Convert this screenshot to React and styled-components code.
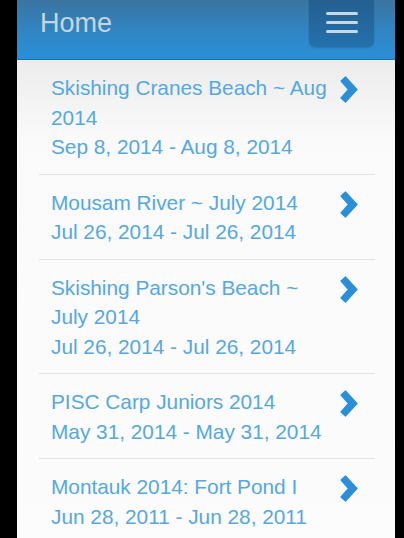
import styled, { createGlobalStyle } from 'styled-components';

const GlobalStyle = createGlobalStyle`
  html, body {
    margin: 0;
    background: #000;
    overflow: hidden;
  }
`;

const Frame = styled.div`
  margin-left: 17px;
  width: 378px;
  height: 538px;
  overflow: hidden;
  background: linear-gradient(to bottom, #ececec 60px, #fafafa 140px, #fcfcfc 100%);
  font-family: "Liberation Sans", Arial, sans-serif;
`;

const Header = styled.header`
  height: 59px;
  display: flex;
  justify-content: space-between;
  align-items: flex-start;
  padding: 0 21px 0 23px;
  background: linear-gradient(to bottom, #3b74a0 0%, #3183bf 45%, #2a90d8 100%);
  border-bottom: 1px solid #1e70aa;
`;

const Title = styled.h1`
  margin: 7px 0 0;
  font-size: 27px;
  font-weight: normal;
  line-height: 32px;
  color: #c8d5de;
`;

const MenuButton = styled.button`
  width: 65px;
  height: 47px;
  border: none;
  border-radius: 0 0 6px 6px;
  background: linear-gradient(to bottom, #245f8f, #2471ad);
  box-shadow: 0 1px 2px rgba(0, 0, 0, 0.15);
  display: flex;
  flex-direction: column;
  align-items: center;
  justify-content: center;
  gap: 6px;
  padding: 0 0 2px;
`;

const Bar = styled.span`
  width: 32px;
  height: 3px;
  border-radius: 2px;
  background: #c9d7e2;
`;

const List = styled.ul`
  list-style: none;
  margin: 0;
  padding: 0 20px 0 22px;
`;

const Item = styled.li`
  display: flex;
  align-items: flex-start;
  padding: 13px 0 12px 12px;
  border-bottom: 1px solid #e2e2e2;
`;

const Text = styled.div`
  width: 287px;
  font-size: 20.8px;
  line-height: 29.5px;
  color: #55a8e1;
`;

const Line = styled.div``;

const Chevron = styled.svg`
  flex: none;
  margin: 3px 0 0 2px;
  width: 18px;
  height: 27px;
`;

const trips = [
  { name: 'Skishing Cranes Beach ~ Aug 2014', dates: 'Sep 8, 2014 - Aug 8, 2014' },
  { name: 'Mousam River ~ July 2014', dates: 'Jul 26, 2014 - Jul 26, 2014' },
  { name: "Skishing Parson's Beach ~ July 2014", dates: 'Jul 26, 2014 - Jul 26, 2014' },
  { name: 'PISC Carp Juniors 2014', dates: 'May 31, 2014 - May 31, 2014' },
  { name: 'Montauk 2014: Fort Pond I', dates: 'Jun 28, 2011 - Jun 28, 2011' },
];

const App = () => (
  <>
    <GlobalStyle />
    <Frame>
      <Header>
        <Title>Home</Title>
        <MenuButton aria-label="Menu">
          <Bar />
          <Bar />
          <Bar />
        </MenuButton>
      </Header>
      <List>
        {trips.map((t) => (
          <Item key={t.name}>
            <Text>
              <Line>{t.name}</Line>
              <Line>{t.dates}</Line>
            </Text>
            <Chevron viewBox="0 0 18 27">
              <polygon
                points="1,5 5.5,1 17,13.5 5.5,26 1,22 8.5,13.5"
                fill="#2b8fd8"
                stroke="#2b8fd8"
                strokeWidth="1.2"
                strokeLinejoin="round"
              />
            </Chevron>
          </Item>
        ))}
      </List>
    </Frame>
  </>
);

export default App;
